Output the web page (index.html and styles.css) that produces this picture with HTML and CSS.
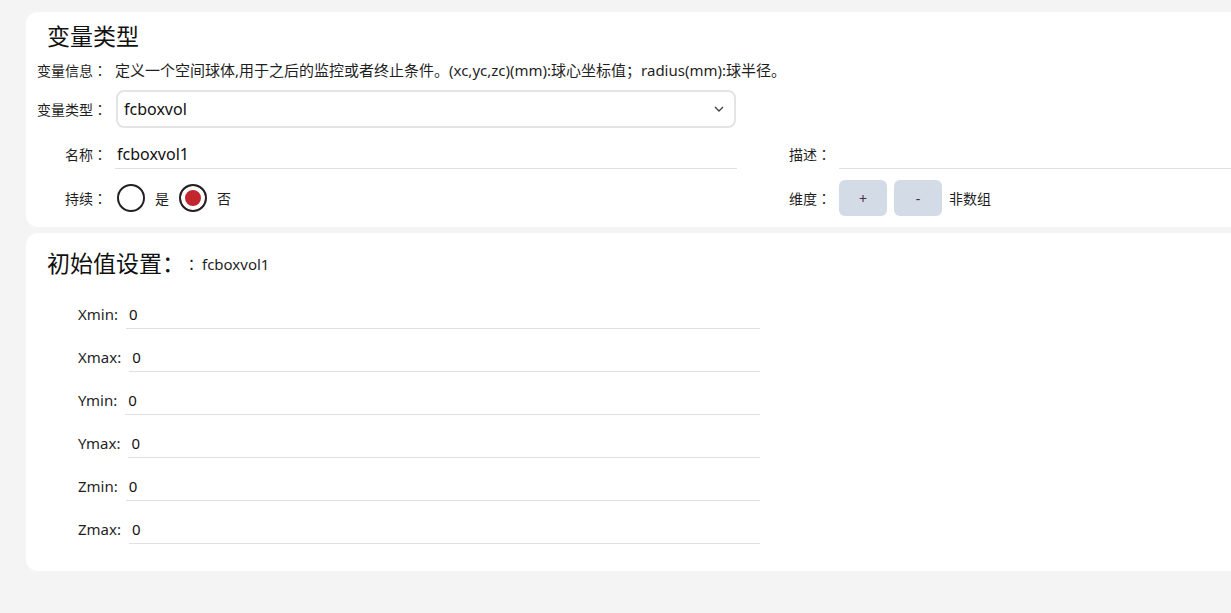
FILE: index.html
```html
<!DOCTYPE html>
<html lang="zh-CN">
<head>
  <meta charset="UTF-8" />
  <title>变量类型</title>
  <link rel="stylesheet" href="styles.css">
</head>
<body>
  <div class="page">
    <section class="card card-type">
      <h2 class="card-title">变量类型</h2>
      <div class="info">变量信息<span class="colon">：</span><span class="info-text">定义一个空间球体,用于之后的监控或者终止条件。(xc,yc,zc)(mm):球心坐标值；radius(mm):球半径。</span></div>

      <div class="form-grid">
        <div class="field">
          <label class="field-label">变量类型<span class="colon">：</span></label>
          <div class="select-wrap">
            <select class="select">
              <option>fcboxvol</option>
            </select>
            <svg class="chevron" width="10" height="6" viewBox="0 0 10 6">
              <path d="M1 1 L5 5 L9 1" fill="none" stroke="#444" stroke-width="1.4" />
            </svg>
          </div>
        </div>
        <div></div>

        <div class="field">
          <label class="field-label">名称<span class="colon">：</span></label>
          <input class="line-input" type="text" value="fcboxvol1" />
        </div>
        <div class="field">
          <label class="field-label">描述<span class="colon">：</span></label>
          <input class="line-input" type="text" value="" />
        </div>

        <div class="field">
          <label class="field-label">持续<span class="colon">：</span></label>
          <div class="radios">
            <input class="radio" type="radio" name="persist" id="persistYes" />
            <label for="persistYes">是</label>
            <input class="radio" type="radio" name="persist" id="persistNo" checked />
            <label for="persistNo">否</label>
          </div>
        </div>
        <div class="field">
          <label class="field-label">维度<span class="colon">：</span></label>
          <div class="dims">
            <button class="dim-btn">+</button>
            <button class="dim-btn">-</button>
            <span>非数组</span>
          </div>
        </div>
      </div>
    </section>

    <section class="card card-init">
      <div class="init-head">
        <h2 class="card-title">初始值设置：</h2>
        <span class="init-name"><span class="colon">：</span>fcboxvol1</span>
      </div>

      <div class="init-rows">
        <div class="init-row"><label>Xmin:</label><input class="line-input" type="text" value="0" /></div>
        <div class="init-row"><label>Xmax:</label><input class="line-input" type="text" value="0" /></div>
        <div class="init-row"><label>Ymin:</label><input class="line-input" type="text" value="0" /></div>
        <div class="init-row"><label>Ymax:</label><input class="line-input" type="text" value="0" /></div>
        <div class="init-row"><label>Zmin:</label><input class="line-input" type="text" value="0" /></div>
        <div class="init-row"><label>Zmax:</label><input class="line-input" type="text" value="0" /></div>
      </div>
    </section>
  </div>
</body>
</html>
```

FILE: styles.css
```css
html, body {
  margin: 0;
  padding: 0;
  background-color: #f4f4f4;
  overflow: hidden;
}

body {
  font-family: "Noto Sans", "Noto Sans CJK SC", sans-serif;
  font-size: 14px;
  color: #1f1f1f;
}

.page {
  padding: 12px 0 0 26px;
  width: 1500px;
}

.card {
  background: #fff;
  border-radius: 12px;
  width: 1480px;
  box-sizing: border-box;
}

.card-type {
  padding: 9px 11px 11px 11px;
}

.card-init {
  margin-top: 6px;
  padding: 15px 0 27px 0;
}

.card-title {
  margin: 0;
  padding-left: 10px;
  font-size: 23px;
  font-weight: normal;
  line-height: 30px;
  color: #111;
}

/* 全角冒号居中显示 */
.colon {
  display: inline-block;
  width: 14px;
  margin-right: 8px;
  text-align: center;
  font-family: "Noto Sans CJK TC", sans-serif;
}

.info {
  margin-top: 9px;
  line-height: 20px;
}

.info-text {
  font-size: 15px;
}

.form-grid {
  display: grid;
  grid-template-columns: 700px 700px;
  column-gap: 24px;
  row-gap: 11px;
  margin-top: 9px;
}

.field {
  display: flex;
  align-items: center;
  min-height: 30px;
}

.field-label {
  width: 78px;
  flex: none;
  text-align: right;
  white-space: nowrap;
}

.select-wrap {
  position: relative;
  margin-left: 1px;
}

.select {
  appearance: none;
  width: 620px;
  height: 38px;
  border: 2px solid #e4e4e4;
  border-radius: 8px;
  background: #fff;
  padding: 0 6px;
  font-family: inherit;
  font-size: 16px;
  color: #111;
  outline: none;
}

.chevron {
  position: absolute;
  right: 12px;
  top: 16px;
}

.line-input {
  flex: 1;
  height: 30px;
  border: none;
  border-bottom: 1px solid #e0e0e0;
  padding: 0 2px;
  font-family: inherit;
  font-size: 16px;
  color: #111;
  outline: none;
  background: transparent;
  box-sizing: border-box;
}

.radios {
  display: flex;
  align-items: center;
  gap: 10px;
  margin-left: 2px;
}

.radio {
  appearance: none;
  margin: 0;
  width: 28px;
  height: 28px;
  border: 2px solid #222;
  border-radius: 50%;
  background: #fff;
  box-sizing: border-box;
}

.radio:checked {
  background: #c1272d;
  box-shadow: inset 0 0 0 4px #fff;
}

.dims {
  display: flex;
  align-items: center;
  gap: 7px;
}

.dim-btn {
  width: 48px;
  height: 36px;
  border: none;
  border-radius: 6px;
  background-color: #d3dbe6;
  color: #4a2a4a;
  font-family: inherit;
  font-size: 14px;
  padding: 0;
}

.init-head {
  display: flex;
  align-items: center;
  padding-left: 11px;
}

.init-name {
  font-size: 15px;
  margin-left: -1px;
}

.init-name .colon {
  margin-right: 4px;
}

.init-rows {
  margin-top: 21px;
  padding-left: 52px;
  width: 682px;
  display: flex;
  flex-direction: column;
  gap: 13px;
}

.init-row {
  display: flex;
  align-items: center;
  gap: 8px;
}

.init-row label {
  font-size: 15px;
}

.init-row .line-input {
  padding: 0 3px;
  font-size: 15px;
}
```
